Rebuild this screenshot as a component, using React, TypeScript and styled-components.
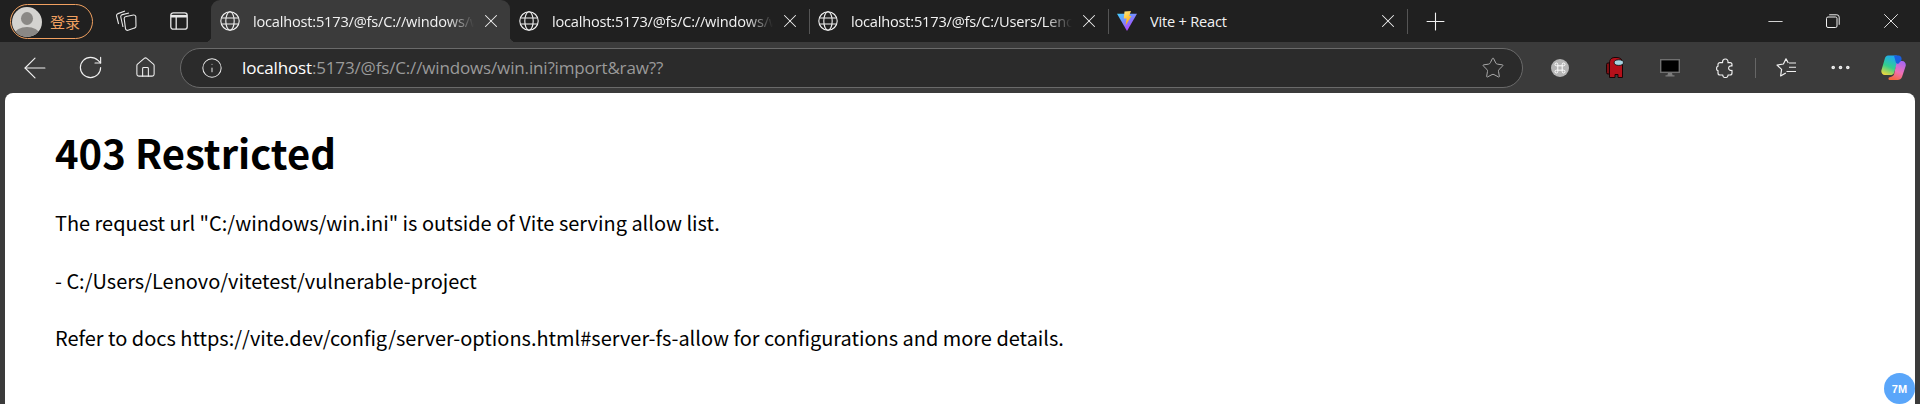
import React from 'react';
import styled, { createGlobalStyle } from 'styled-components';
import { ArrowLeft, RotateCw, Home, Info, Star, X, Plus, Minus, Ellipsis } from 'lucide-react';

const GlobalStyle = createGlobalStyle`
  html, body {
    margin: 0;
    height: 404px;
    overflow: hidden;
    background: #3b3b3b;
  }
`;

const tabs = [
  { id: 1, title: 'localhost:5173/@fs/C://windows/win.ini', active: true, icon: 'globe' },
  { id: 2, title: 'localhost:5173/@fs/C://windows/win.ini', active: false, icon: 'globe' },
  { id: 3, title: 'localhost:5173/@fs/C:/Users/Lenovo/vitetest', active: false, icon: 'globe' },
  { id: 4, title: 'Vite + React', active: false, icon: 'vite' },
];

function Globe() {
  return (
    <svg width="20" height="20" viewBox="0 0 20 20" fill="none" stroke="#f2f2f2" strokeWidth="1.1">
      <circle cx="10" cy="10" r="9.2" />
      <ellipse cx="10" cy="10" rx="4.2" ry="9.2" />
      <path d="M1.6 7h16.8M1.6 13h16.8" />
    </svg>
  );
}

function ViteLogo() {
  return (
    <svg width="20" height="20" viewBox="0 0 20 20">
      <defs>
        <linearGradient id="viteBody" x1="0" y1="0" x2="0.7" y2="1">
          <stop offset="0" stopColor="#41d1ff" />
          <stop offset="1" stopColor="#bd34fe" />
        </linearGradient>
        <linearGradient id="viteBolt" x1="0" y1="0" x2="0.4" y2="1">
          <stop offset="0" stopColor="#ffea83" />
          <stop offset="1" stopColor="#ffa800" />
        </linearGradient>
      </defs>
      <path d="M0 2.8 L20 2.8 L10 20 Z" fill="url(#viteBody)" />
      <path d="M7.5 0.5 L14 0 L12.2 5 L14.4 5 L8.6 14.5 L9.6 7.6 L6.8 7.6 Z" fill="url(#viteBolt)" />
    </svg>
  );
}

function TabsIcon() {
  return (
    <svg width="22" height="22" viewBox="0 0 22 22" fill="none" stroke="#e8e8e8" strokeWidth="1.1">
      <path d="M11 6.5L18.5 5a2 2 0 0 1 2.3 1.7L21 16a2 2 0 0 1-1.6 2.1L13 20.3a2 2 0 0 1-2.5-1.7L9.2 8.7A2 2 0 0 1 11 6.5z" />
      <path d="M8 17L5.8 7a2 2 0 0 1 1.5-2.4L14 3" />
      <path d="M3.6 14L1.6 6a2 2 0 0 1 1.5-2.4L10 1" />
    </svg>
  );
}

function VerticalTabsIcon() {
  return (
    <svg width="18" height="18" viewBox="0 0 18 18" fill="none" stroke="#e8e8e8" strokeWidth="1.3">
      <rect x="0.8" y="0.8" width="16.4" height="16.4" rx="2.5" />
      <path d="M1 4.2h16" strokeWidth="2.6" />
      <path d="M6.2 4.2v13" />
    </svg>
  );
}

function RestoreIcon() {
  return (
    <svg width="14" height="14" viewBox="0 0 14 14" fill="none" stroke="#f0f0f0" strokeWidth="1">
      <rect x="0.5" y="3" width="10.5" height="10.5" rx="1.5" />
      <path d="M3.2 0.8h7.6a2.4 2.4 0 0 1 2.4 2.4v7.6" />
    </svg>
  );
}

function CommandExtension() {
  return (
    <svg width="18" height="18" viewBox="0 0 18 18">
      <circle cx="9" cy="9" r="9" fill="#b5b5b5" />
      <path
        d="M6.8 6.8h4.4v4.4H6.8zM6.8 6.8H5.4a1.4 1.4 0 1 1 1.4-1.4zM11.2 6.8V5.4a1.4 1.4 0 1 1 1.4 1.4zM11.2 11.2h1.4a1.4 1.4 0 1 1-1.4 1.4zM6.8 11.2v1.4a1.4 1.4 0 1 1-1.4-1.4z"
        fill="none"
        stroke="#fff"
        strokeWidth="1"
      />
    </svg>
  );
}

function CrewmateExtension() {
  return (
    <svg width="18" height="21" viewBox="0 0 18 21">
      <rect x="0.5" y="6" width="4.5" height="11" rx="1.5" fill="#7d0d12" stroke="#1a0406" strokeWidth="1" />
      <path
        d="M3.5 6C3.5 2 6 .5 9 .5h2c3 0 5.5 2 5.5 5v15H12v-3H9v3H3.5z"
        fill="#b5101a"
        stroke="#1a0406"
        strokeWidth="1"
      />
      <ellipse cx="12.8" cy="5.6" rx="4.6" ry="2.8" fill="#a7d5e2" stroke="#111" strokeWidth="0.9" />
    </svg>
  );
}

function MonitorExtension() {
  return (
    <svg width="20" height="18" viewBox="0 0 20 18">
      <rect x="0.7" y="0.7" width="18.6" height="12.6" fill="#000" stroke="#6f6f6f" strokeWidth="1.4" />
      <path d="M8 14h4l0.6 2.2H7.4zM5.5 16.2h9V17.4h-9z" fill="#7c7c7c" />
    </svg>
  );
}

function PuzzleIcon() {
  return (
    <svg width="18" height="20" viewBox="0 0 18 20" fill="none" stroke="#f0f0f0" strokeWidth="1.15" strokeLinejoin="round">
      <path d="M4 4.6h2.6C6.4 2.4 7.6 1 9.4 1s2.8 1.4 2.6 3.6h2a2 2 0 0 1 2 2V8c-1.8-.4-3.4.6-3.4 2.2s1.6 2.6 3.4 2.2V15a2 2 0 0 1-2 2h-2c.2 1.6-1 2.5-2.6 2.5s-2.8-.9-2.6-2.5H4a2 2 0 0 1-2-2v-2.4c-1.2 0-1.4-1.2-1.4-2.2S1 8.2 2 8.2V6.6a2 2 0 0 1 2-2z" />
    </svg>
  );
}

function FavoritesIcon() {
  return (
    <svg width="20" height="19" viewBox="0 0 20 19" fill="none" stroke="#f0f0f0" strokeWidth="1.2" strokeLinejoin="round">
      <path d="M12.3 5L10 .8 7.4 6 1 7l4.6 4.4L4.6 18l5.2-3" />
      <path d="M13 5h7M13 9.3h7M10.5 13.5H20" strokeWidth="1.1" />
    </svg>
  );
}

function CopilotLogo() {
  return (
    <svg width="25" height="27" viewBox="0 0 25 27">
      <defs>
        <linearGradient id="copilotLeft" x1="0.6" y1="0" x2="0.2" y2="1">
          <stop offset="0" stopColor="#1fa8f4" />
          <stop offset="0.55" stopColor="#34cf8c" />
          <stop offset="1" stopColor="#f4d83c" />
        </linearGradient>
        <linearGradient id="copilotRight" x1="0.7" y1="0" x2="0.3" y2="1">
          <stop offset="0" stopColor="#a866f2" />
          <stop offset="0.55" stopColor="#f070b4" />
          <stop offset="1" stopColor="#f4683c" />
        </linearGradient>
      </defs>
      <path d="M7 1.5h8c2 0 3 1.5 2.500 3.500L13 19c-.5 1.500-2 2-3.500 2H4c-3 0-4.200-3-3.500-5L4 4c.6-1.500 1.600-2.500 3-2.500z" fill="url(#copilotLeft)" />
      <path d="M16 7h5c3 0 4.500 3 3.500 5.500L21 23c-.7 2-2.500 3-4.500 3H9c-1.500 0-2-1.500-1-2.500 2-.5 4-1 5-3z" fill="url(#copilotRight)" />
      <path d="M13 1.500h4c3 0 4.500 2.500 3 5.500l-3 3-2-1z" fill="#1a5fe0" />
    </svg>
  );
}

export default function App() {
  return (
    <>
      <GlobalStyle />
      <Window>
        <TabStrip>
          <ProfileButton>
            <Avatar>
              <AvatarHead />
              <AvatarBody />
            </Avatar>
            <ProfileLabel>登录</ProfileLabel>
          </ProfileButton>
          <StripIcons>
            <StripIcon>
              <TabsIcon />
            </StripIcon>
            <StripIcon>
              <VerticalTabsIcon />
            </StripIcon>
          </StripIcons>
          <TabList>
            {tabs.map((tab, index) => (
              <Tab key={tab.id} $active={tab.active} $divided={index > 1}>
                <TabIcon>{tab.icon === 'vite' ? <ViteLogo /> : <Globe />}</TabIcon>
                <TabTitle $fade={tab.icon !== 'vite'}>{tab.title}</TabTitle>
                <TabClose>
                  <X size={22} strokeWidth={1.1} />
                </TabClose>
              </Tab>
            ))}
            <TabDivider />
            <NewTab>
              <Plus size={29} strokeWidth={0.9} />
            </NewTab>
          </TabList>
          <WindowControls>
            <WindowButton>
              <Minus size={23} strokeWidth={0.9} />
            </WindowButton>
            <WindowButton>
              <RestoreIcon />
            </WindowButton>
            <WindowButton>
              <X size={26} strokeWidth={0.85} />
            </WindowButton>
          </WindowControls>
        </TabStrip>

        <Toolbar>
          <NavButton $width={58}>
            <ArrowLeft size={34} strokeWidth={0.8} />
          </NavButton>
          <NavButton $width={52}>
            <RotateCw size={27} strokeWidth={1} />
          </NavButton>
          <NavButton $width={58}>
            <Home size={23} strokeWidth={1.1} />
          </NavButton>
          <AddressBar>
            <Info size={22} strokeWidth={1.1} color="#e8e8e8" />
            <AddressText>
              <strong>localhost</strong>:5173/@fs/C://windows/win.ini?import&amp;raw??
            </AddressText>
            <Star size={24} strokeWidth={1} color="#a8a8a8" />
          </AddressBar>
          <ExtensionTray>
            <Extension>
              <CommandExtension />
            </Extension>
            <Extension>
              <CrewmateExtension />
            </Extension>
            <Extension>
              <MonitorExtension />
            </Extension>
            <Extension>
              <PuzzleIcon />
            </Extension>
            <ToolbarDivider />
            <Extension>
              <FavoritesIcon />
            </Extension>
            <Extension>
              <Ellipsis size={25} strokeWidth={1.5} />
            </Extension>
            <CopilotSlot>
              <CopilotLogo />
            </CopilotSlot>
          </ExtensionTray>
        </Toolbar>

        <Page>
          <Heading>403 Restricted</Heading>
          <Paragraph>The request url "C:/windows/win.ini" is outside of Vite serving allow list.</Paragraph>
          <Paragraph>- C:/Users/Lenovo/vitetest/vulnerable-project</Paragraph>
          <Paragraph>
            Refer to docs https://vite.dev/config/server-options.html#server-fs-allow for configurations and more
            details.
          </Paragraph>
          <Badge>7M</Badge>
        </Page>
      </Window>
    </>
  );
}

const Window = styled.div`
  width: 1920px;
  height: 404px;
  display: flex;
  flex-direction: column;
  overflow: hidden;
  background-color: #3b3b3b;
  font-family: 'Open Sans', 'Noto Sans', sans-serif;
`;

const TabStrip = styled.div`
  height: 42px;
  flex: none;
  padding-left: 10px;
  display: flex;
  align-items: stretch;
  background-color: #202020;
`;

const ProfileButton = styled.div`
  margin-top: 4px;
  width: 83px;
  height: 35px;
  box-sizing: border-box;
  padding-left: 1px;
  flex: none;
  display: flex;
  align-items: center;
  gap: 8px;
  border: 1px solid #f0a060;
  border-radius: 18px;
`;

const Avatar = styled.div`
  position: relative;
  width: 30px;
  height: 30px;
  overflow: hidden;
  flex: none;
  border-radius: 50%;
  background-color: #d4d3d0;
`;

const AvatarHead = styled.div`
  position: absolute;
  top: 5px;
  left: 9px;
  width: 12px;
  height: 13px;
  border-radius: 50%;
  background-color: #8a8885;
`;

const AvatarBody = styled.div`
  position: absolute;
  top: 20px;
  left: 3px;
  width: 24px;
  height: 14px;
  border-radius: 50%;
  background-color: #8a8885;
`;

const ProfileLabel = styled.span`
  font-family: 'Noto Sans CJK SC', sans-serif;
  font-size: 15px;
  color: #f0a060;
`;

const StripIcons = styled.div`
  margin-left: 6px;
  display: flex;
`;

const StripIcon = styled.div`
  width: 53px;
  display: flex;
  align-items: center;
  justify-content: center;
`;

const TabList = styled.div`
  margin-left: 6px;
  display: flex;
  flex: 1;
  align-items: stretch;
`;

const Tab = styled.div<{ $active: boolean; $divided: boolean }>`
  position: relative;
  width: 299px;
  height: 42px;
  box-sizing: border-box;
  padding: 0 8px 0 9px;
  display: flex;
  align-items: center;
  flex: none;
  color: #f2f2f2;
  background-color: ${p => (p.$active ? '#3b3b3b' : 'transparent')};
  border-radius: ${p => (p.$active ? '9px 9px 0 0' : '0')};

  ${p =>
    p.$divided &&
    `&::before {
      content: '';
      position: absolute;
      left: 0;
      top: 9px;
      width: 1px;
      height: 25px;
      background-color: #555;
    }`}

  ${p =>
    p.$active &&
    `&::after {
      content: '';
      position: absolute;
      left: -6px;
      right: -6px;
      bottom: 0;
      height: 6px;
      z-index: 0;
      background:
        radial-gradient(circle at 0 0, transparent 6px, #3b3b3b 6.5px) left bottom / 6px 6px no-repeat,
        radial-gradient(circle at 100% 0, transparent 6px, #3b3b3b 6.5px) right bottom / 6px 6px no-repeat;
    }`}
`;

const TabIcon = styled.span`
  width: 20px;
  height: 20px;
  flex: none;
  display: flex;
`;

const TabTitle = styled.span<{ $fade: boolean }>`
  margin-left: 13px;
  flex: 1;
  min-width: 0;
  overflow: hidden;
  white-space: nowrap;
  font-size: 14.6px;
  letter-spacing: -0.2px;
  ${p =>
    p.$fade &&
    `-webkit-mask-image: linear-gradient(to right, #000 88%, transparent 100%);
     mask-image: linear-gradient(to right, #000 88%, transparent 100%);`}
`;

const TabClose = styled.span`
  margin-left: 6px;
  width: 22px;
  height: 22px;
  flex: none;
  display: flex;
`;

const TabDivider = styled.div`
  margin-top: 9px;
  width: 1px;
  height: 25px;
  background-color: #555;
`;

const NewTab = styled.div`
  width: 54px;
  display: flex;
  align-items: center;
  justify-content: center;
  color: #f2f2f2;
`;

const WindowControls = styled.div`
  display: flex;
  align-items: center;
`;

const WindowButton = styled.div`
  width: 58px;
  height: 42px;
  display: flex;
  align-items: center;
  justify-content: center;
  color: #f0f0f0;
`;

const Toolbar = styled.div`
  height: 51px;
  flex: none;
  padding-left: 6px;
  display: flex;
  align-items: center;
  background-color: #3b3b3b;
`;

const NavButton = styled.div<{ $width: number }>`
  width: ${p => p.$width}px;
  display: flex;
  justify-content: center;
  color: #f0f0f0;
`;

const AddressBar = styled.div`
  width: 1343px;
  height: 40px;
  box-sizing: border-box;
  margin-left: 6px;
  padding: 0 17px 0 20px;
  flex: none;
  display: flex;
  align-items: center;
  background-color: #2b2b2b;
  border: 1px solid #6a6a6a;
  border-radius: 20px;
`;

const AddressText = styled.div`
  margin-left: 19px;
  flex: 1;
  font-size: 17px;
  letter-spacing: -0.15px;
  color: #9a9a9a;

  strong {
    font-weight: 400;
    color: #fff;
  }
`;

const ExtensionTray = styled.div`
  margin-left: 9px;
  display: flex;
  align-items: center;
`;

const Extension = styled.div`
  width: 55px;
  display: flex;
  justify-content: center;
  align-items: center;
  color: #f0f0f0;
`;

const CopilotSlot = styled(Extension)`
  width: 50px;
`;

const ToolbarDivider = styled.div`
  margin: 0 2px 0 3px;
  width: 1px;
  height: 20px;
  background-color: #666;
`;

const Page = styled.main`
  position: relative;
  margin: 0 5px;
  flex: 1;
  padding: 36px 50px 0 50px;
  background-color: #fff;
  border-radius: 8px 8px 0 0;
  color: #000;
  font-family: 'Noto Sans CJK SC', 'Noto Sans', sans-serif;
`;

const Heading = styled.h1`
  margin: 0 0 34px;
  font-size: 40px;
  line-height: 46px;
  font-weight: 700;
`;

const Paragraph = styled.p`
  margin: 0 0 29.5px;
  font-size: 19.97px;
  line-height: 28px;
`;

const Badge = styled.div`
  position: absolute;
  right: 0;
  bottom: 0;
  width: 31px;
  height: 31px;
  display: flex;
  align-items: center;
  justify-content: center;
  border-radius: 50%;
  background-color: #5aa6fa;
  color: #fff;
  font-family: 'Liberation Sans', sans-serif;
  font-size: 11px;
  font-weight: 700;
`;
